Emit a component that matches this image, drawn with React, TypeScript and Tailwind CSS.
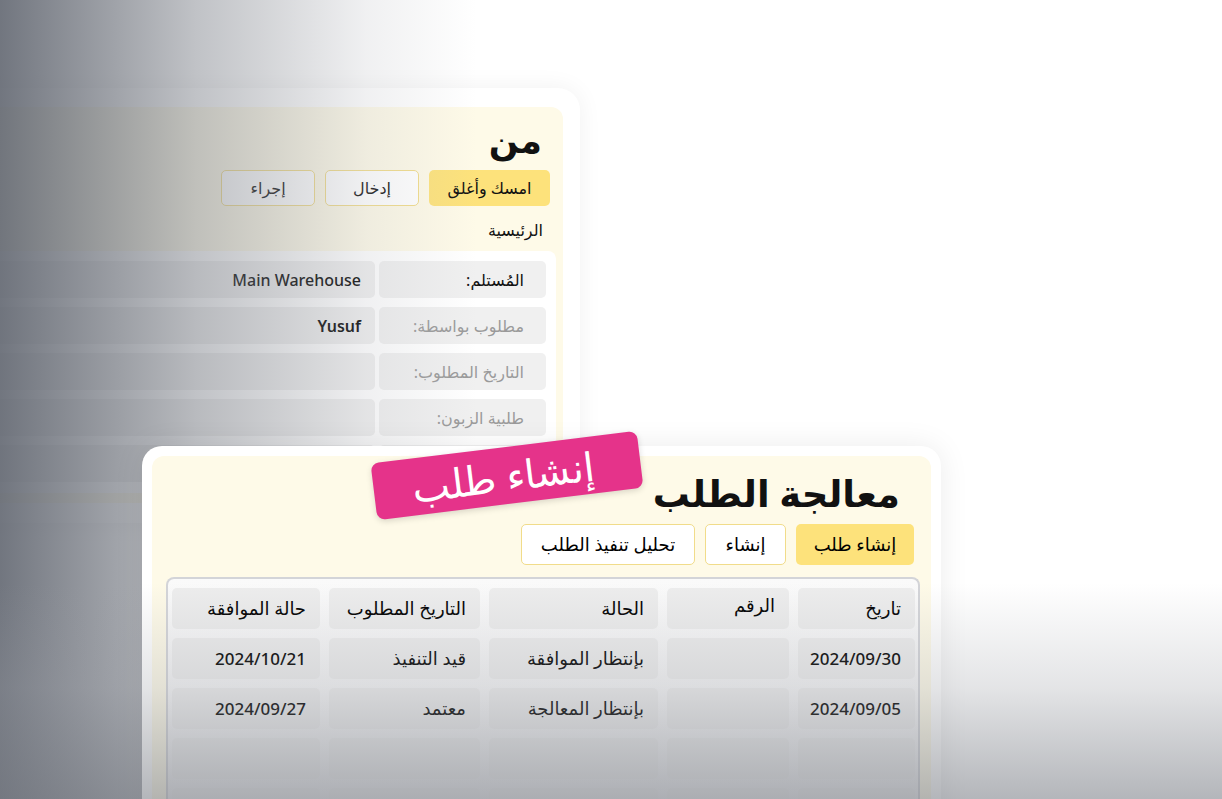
import React from 'react';

const font = { fontFamily: '"Noto Sans", "DejaVu Sans", sans-serif' };

const backRows = [
  { label: 'المُستلم:', value: 'Main Warehouse', strong: true },
  { label: 'مطلوب بواسطة:', value: 'Yusuf', strong: false },
  { label: 'التاريخ المطلوب:', value: '', strong: false },
  { label: 'طلبية الزبون:', value: '', strong: false },
  { label: '', value: '', strong: false },
];

const tableRows = [
  ['تاريخ', 'الرقم', 'الحالة', 'التاريخ المطلوب', 'حالة الموافقة'],
  ['2024/09/30', '', 'بإنتظار الموافقة', 'قيد التنفيذ', '2024/10/21'],
  ['2024/09/05', '', 'بإنتظار المعالجة', 'معتمد', '2024/09/27'],
  ['', '', '', '', ''],
  ['', '', '', '', ''],
];

function BackCard() {
  return (
    <div className="absolute left-[-60px] top-[88px] flex h-[435px] w-[640px] flex-col rounded-[22px] bg-white pt-[19px] pr-[17px] pb-[20px] shadow-[0_0_24px_rgba(0,0,0,0.06)]">
      <div className="flex flex-1 flex-col rounded-[12px] bg-[#fefae8] pt-[10px] pb-[10px] pr-[7px]">
        <h1 className="pr-[14px] text-[35px] font-bold leading-[46px] text-[#111]">من</h1>
        <div className="mt-[7px] flex gap-[10px] pr-[6px]">
          <span className="flex h-[36px] w-[121px] items-center justify-center rounded-[5px] bg-[#fde27b] text-[16px] text-[#111]">
            امسك وأغلق
          </span>
          <span className="flex h-[36px] w-[94px] items-center justify-center rounded-[5px] border-[1.5px] border-[#f1dc8a] bg-white text-[16px] text-[#111]">
            إدخال
          </span>
          <span className="flex h-[36px] w-[94px] items-center justify-center rounded-[5px] border-[1.5px] border-[#f1dc8a] bg-white text-[16px] text-[#111]">
            إجراء
          </span>
        </div>
        <div className="mt-[11px] pr-[13px] text-[16px] leading-[26px] text-[#111]">الرئيسية</div>
        <div className="mt-[8px] flex flex-1 flex-col gap-[9px] rounded-[8px] bg-white pt-[10px] pr-[10px] pb-[8px]">
          {backRows.map((r, i) => (
            <div key={i} className="flex h-[37px] shrink-0 gap-[4px]">
              <div
                className={
                  'flex w-[167px] shrink-0 items-center rounded-[5px] bg-[#f0f0f0] pr-[22px] text-[16px] ' +
                  (i === 0 ? 'text-[#111]' : 'text-[#9a9a9a]')
                }
              >
                {r.label}
              </div>
              <div
                className={
                  'flex flex-1 items-center justify-end rounded-[5px] bg-[#efefef] pr-[14px] text-[16px] text-black ' +
                  (r.strong ? 'font-medium' : 'font-semibold')
                }
                dir="ltr"
              >
                {r.value}
              </div>
            </div>
          ))}
        </div>
      </div>
    </div>
  );
}

function cellClass(ri: number, ci: number) {
  const isDate = ri > 0 && (ci === 0 || ci === 4);
  let c = 'flex h-[41px] items-center rounded-[5px] bg-[#ededed] pr-[14px] text-black ';
  c += isDate ? 'text-[17px] font-medium' : 'text-[18px]';
  if (ri === 0 && ci === 1) c += ' pb-[6px]';
  return c;
}

function FrontCard() {
  return (
    <div className="absolute left-[142px] top-[446px] w-[799px] rounded-[20px] bg-white p-[10px] pb-0 shadow-[0_0_30px_rgba(0,0,0,0.08)]">
      <div className="flex h-[400px] flex-col rounded-t-[12px] bg-[#fefae8] pr-[11px] pl-[14px] pt-[12px]">
        <h2 className="pr-[20px] text-[37px] font-bold leading-[50px] text-[#111]">معالجة الطلب</h2>
        <div className="mt-[6px] flex gap-[10px] pr-[6px]">
          <span className="flex h-[41px] w-[118px] items-center justify-center rounded-[5px] bg-[#fde27b] text-[18px] text-black">
            إنشاء طلب
          </span>
          <span className="flex h-[41px] w-[81px] items-center justify-center rounded-[5px] border-[1.5px] border-[#f1dc8a] bg-white text-[18px] text-black">
            إنشاء
          </span>
          <span className="flex h-[41px] w-[174px] items-center justify-center rounded-[5px] border-[1.5px] border-[#f1dc8a] bg-white text-[18px] text-black">
            تحليل تنفيذ الطلب
          </span>
        </div>
        <div className="mt-[12px] flex-1 rounded-t-[8px] border-2 border-b-0 border-[#d3d4d8] bg-gradient-to-b from-[#fafafa] to-[#ececee] pr-[3px] pl-[6px] pt-[9px]">
          <div className="grid grid-cols-[117px_122px_169px_151px_148px] gap-x-[9px] gap-y-[9px]">
            {tableRows.map((row, ri) =>
              row.map((c, ci) => (
                <div key={ri + '-' + ci} className={cellClass(ri, ci)}>
                  {c}
                </div>
              ))
            )}
          </div>
        </div>
      </div>
    </div>
  );
}

export default function App() {
  return (
    <div dir="rtl" style={font} className="relative h-[799px] w-[1222px] overflow-hidden bg-white">
      <BackCard />
      {/* left haze over the back card */}
      <div className="pointer-events-none absolute inset-0 bg-[linear-gradient(to_right,rgba(98,103,113,0.9)_0%,rgba(130,134,142,0.5)_16%,rgba(180,182,188,0.2)_30%,rgba(255,255,255,0)_39%)]" />
      <FrontCard />
      {/* bottom haze */}
      <div className="pointer-events-none absolute inset-0 bg-[linear-gradient(to_bottom,rgba(255,255,255,0)_0%,rgba(255,255,255,0)_73%,rgba(150,153,160,0.26)_86%,rgba(118,122,130,0.55)_100%)]" />
      <div className="absolute left-[373px] top-[447px] flex h-[57px] w-[268px] -rotate-[7deg] items-center justify-center rounded-[8px] bg-[#e5338a] pr-[8px] text-[40px] font-light leading-none text-white shadow-[0_2px_6px_rgba(0,0,0,0.15)]">
        إنشاء طلب
      </div>
    </div>
  );
}
